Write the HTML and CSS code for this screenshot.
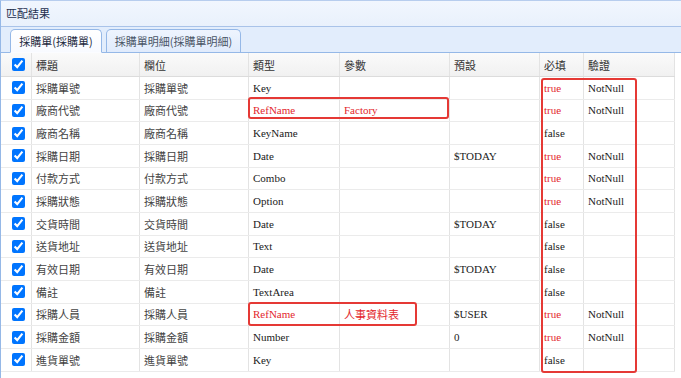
FILE: index.html
```html
<!DOCTYPE html>
<html lang="zh-Hant">
<head>
<meta charset="utf-8">
<title>匹配結果</title>
<link rel="stylesheet" href="styles.css">
</head>
<body>
<div class="panel">
  <div class="panel-header"><span class="panel-title">匹配結果</span></div>
  <div class="tabs-header">
    <div class="tab tab-1 selected">採購單(採購單)</div>
    <div class="tab tab-2">採購單明細(採購單明細)</div>
  </div>
  <div class="grid">
    <div class="row head">
      <div class="cell ck"><input type="checkbox" checked></div>
      <div class="cell cjk">標題</div>
      <div class="cell cjk">欄位</div>
      <div class="cell cjk">類型</div>
      <div class="cell cjk">參數</div>
      <div class="cell cjk">預設</div>
      <div class="cell cjk">必填</div>
      <div class="cell cjk">驗證</div>
    </div>

    <div class="row"><div class="cell ck"><input type="checkbox" checked></div><div class="cell cjk">採購單號</div><div class="cell cjk">採購單號</div><div class="cell sf">Key</div><div class="cell sf"></div><div class="cell sf"></div><div class="cell sf red">true</div><div class="cell sf">NotNull</div></div>
    <div class="row"><div class="cell ck"><input type="checkbox" checked></div><div class="cell cjk">廠商代號</div><div class="cell cjk">廠商代號</div><div class="cell sf red">RefName</div><div class="cell sf red">Factory</div><div class="cell sf"></div><div class="cell sf red">true</div><div class="cell sf">NotNull</div></div>
    <div class="row"><div class="cell ck"><input type="checkbox" checked></div><div class="cell cjk">廠商名稱</div><div class="cell cjk">廠商名稱</div><div class="cell sf">KeyName</div><div class="cell sf"></div><div class="cell sf"></div><div class="cell sf">false</div><div class="cell sf"></div></div>
    <div class="row"><div class="cell ck"><input type="checkbox" checked></div><div class="cell cjk">採購日期</div><div class="cell cjk">採購日期</div><div class="cell sf">Date</div><div class="cell sf"></div><div class="cell sf">$TODAY</div><div class="cell sf red">true</div><div class="cell sf">NotNull</div></div>
    <div class="row"><div class="cell ck"><input type="checkbox" checked></div><div class="cell cjk">付款方式</div><div class="cell cjk">付款方式</div><div class="cell sf">Combo</div><div class="cell sf"></div><div class="cell sf"></div><div class="cell sf red">true</div><div class="cell sf">NotNull</div></div>
    <div class="row"><div class="cell ck"><input type="checkbox" checked></div><div class="cell cjk">採購狀態</div><div class="cell cjk">採購狀態</div><div class="cell sf">Option</div><div class="cell sf"></div><div class="cell sf"></div><div class="cell sf red">true</div><div class="cell sf">NotNull</div></div>
    <div class="row"><div class="cell ck"><input type="checkbox" checked></div><div class="cell cjk">交貨時間</div><div class="cell cjk">交貨時間</div><div class="cell sf">Date</div><div class="cell sf"></div><div class="cell sf">$TODAY</div><div class="cell sf">false</div><div class="cell sf"></div></div>
    <div class="row"><div class="cell ck"><input type="checkbox" checked></div><div class="cell cjk">送貨地址</div><div class="cell cjk">送貨地址</div><div class="cell sf">Text</div><div class="cell sf"></div><div class="cell sf"></div><div class="cell sf">false</div><div class="cell sf"></div></div>
    <div class="row"><div class="cell ck"><input type="checkbox" checked></div><div class="cell cjk">有效日期</div><div class="cell cjk">有效日期</div><div class="cell sf">Date</div><div class="cell sf"></div><div class="cell sf">$TODAY</div><div class="cell sf">false</div><div class="cell sf"></div></div>
    <div class="row"><div class="cell ck"><input type="checkbox" checked></div><div class="cell cjk">備註</div><div class="cell cjk">備註</div><div class="cell sf">TextArea</div><div class="cell sf"></div><div class="cell sf"></div><div class="cell sf">false</div><div class="cell sf"></div></div>
    <div class="row"><div class="cell ck"><input type="checkbox" checked></div><div class="cell cjk">採購人員</div><div class="cell cjk">採購人員</div><div class="cell sf red">RefName</div><div class="cell cjk red">人事資料表</div><div class="cell sf">$USER</div><div class="cell sf red">true</div><div class="cell sf">NotNull</div></div>
    <div class="row"><div class="cell ck"><input type="checkbox" checked></div><div class="cell cjk">採購金額</div><div class="cell cjk">採購金額</div><div class="cell sf">Number</div><div class="cell sf"></div><div class="cell sf">0</div><div class="cell sf red">true</div><div class="cell sf">NotNull</div></div>
    <div class="row"><div class="cell ck"><input type="checkbox" checked></div><div class="cell cjk">進貨單號</div><div class="cell cjk">進貨單號</div><div class="cell sf">Key</div><div class="cell sf"></div><div class="cell sf"></div><div class="cell sf">false</div><div class="cell sf"></div></div>

    <div class="mark mark-factory"></div>
    <div class="mark mark-user"></div>
    <div class="mark mark-required"></div>
  </div>
</div>
</body>
</html>
```

FILE: styles.css
```css
* { box-sizing: border-box; }
html, body { margin: 0; padding: 0; background: #fff; }
body {
  font-family: "Noto Sans CJK TC", "Noto Sans", sans-serif;
  font-size: 11px;
  color: #444;
}
.panel {
  width: 681px;
  height: 378px;
  border-left: 1px solid #95b8e7;
  border-top: 1px solid #b7cdee;
  overflow: hidden;
}
.panel-header {
  height: 26px;
  background: linear-gradient(#f1f6fe, #e9f1fc);
  border-bottom: 1px solid #a9c3e9;
  display: flex;
  align-items: center;
  padding-left: 5px;
}
.panel-title {
  color: #1d2f4f;
  font-size: 11px;
  line-height: 1;
}
.tabs-header {
  height: 26px;
  background: #e2edfc;
  border-bottom: 1px solid #95b8e7;
  display: flex;
  align-items: flex-end;
  gap: 4px;
  padding-left: 9px;
}
.tab {
  height: 24px;
  border: 1px solid #95b8e7;
  border-bottom: none;
  border-radius: 5px 5px 0 0;
  display: flex;
  align-items: center;
  justify-content: center;
  font-size: 11px;
  margin-bottom: -1px;
}
.tab-1 { width: 92px; }
.tab-2 { width: 135px; height: 23px; margin-bottom: 0; }
.tab.selected {
  background: linear-gradient(#ffffff, #f8faff);
  color: #1e2b3f;
  border-bottom: 1px solid #fbfcff;
}
.tab-2 {
  background: linear-gradient(#eef4fe, #e0ebfc);
  color: #4a5566;
}
.grid {
  position: relative;
  width: 674px;
}
.row {
  display: grid;
  grid-template-columns: 31px 108px 109px 91px 110px 90px 44px 91px;
  height: 22.67px;
  border-bottom: 1px solid #ebebeb;
}
.row.head {
  height: 24px;
  background: linear-gradient(#fafafa, #f1f1f1);
  border-bottom: 1px solid #dcdcdc;
}
.cell {
  border-right: 1px solid #e3e3e3;
  display: flex;
  align-items: center;
  padding-left: 4px;
  white-space: nowrap;
  overflow: hidden;
}
.cell.ck { padding-left: 11px; }
.cell.ck input {
  margin: 0;
  width: 13px;
  height: 13px;
  accent-color: #0075ff;
}
.cjk {
  font-family: "Noto Sans CJK TC", "Noto Sans", sans-serif;
  font-size: 11px;
  color: #444;
}
.head .cjk { color: #333; }
.sf {
  font-family: "Liberation Serif", "Times New Roman", serif;
  font-size: 11px;
  color: #1a1a1a;
}
.red { color: #e3262c; }
.mark {
  position: absolute;
  border: 2px solid #e53935;
  border-radius: 3px;
  pointer-events: none;
}
.mark-factory { left: 247px; top: 44px; width: 201px; height: 22px; }
.mark-user { left: 247px; top: 249px; width: 169px; height: 24px; }
.mark-required { left: 540px; top: 25px; width: 96px; height: 295px; }
```
